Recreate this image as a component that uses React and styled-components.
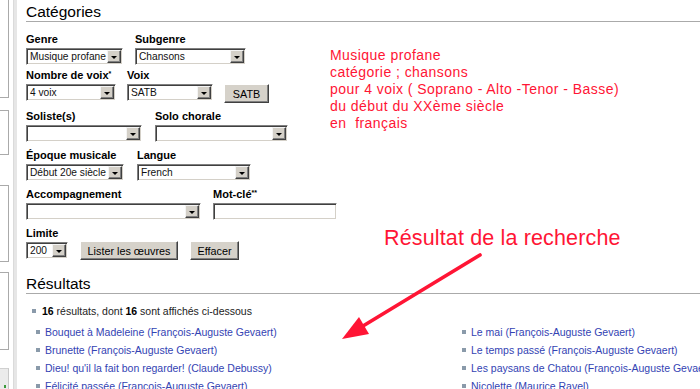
import React from 'react';
import styled, { createGlobalStyle } from 'styled-components';

const GlobalStyle = createGlobalStyle`
  html, body {
    margin: 0;
    padding: 0;
    background: #fff;
    overflow: hidden;
  }
`;

const leftColumn = [
  'Bouquet à Madeleine (François-Auguste Gevaert)',
  'Brunette (François-Auguste Gevaert)',
  "Dieu! qu'il la fait bon regarder! (Claude Debussy)",
  'Félicité passée (François-Auguste Gevaert)',
];

const rightColumn = [
  'Le mai (François-Auguste Gevaert)',
  'Le temps passé (François-Auguste Gevaert)',
  'Les paysans de Chatou (François-Auguste Gevaert)',
  'Nicolette (Maurice Ravel)',
];

const noteLines = [
  'Musique profane',
  'catégorie ; chansons',
  'pour 4 voix ( Soprano - Alto -Tenor - Basse)',
  'du début du XXème siècle',
  'en  français',
];

function Select({ width, value }) {
  return (
    <SelectBox $w={width}>
      <SelectText>{value}</SelectText>
      <ArrowButton>
        <Triangle />
      </ArrowButton>
    </SelectBox>
  );
}

function Field({ label, star, children }) {
  return (
    <FieldWrap>
      <Label>
        {label}
        {star && <Sup>{star}</Sup>}
      </Label>
      {children}
    </FieldWrap>
  );
}

export default function App() {
  return (
    <Page>
      <GlobalStyle />
      <Sidebar>
        <SideBox $h={98} $mt={0} />
        <SideBox $h={45} $mt={12} />
        <SideBox $h={77} $mt={30} />
        <SideBox $h={78} $mt={10} />
        <SideFooter>
          <GreenDot />
        </SideFooter>
      </Sidebar>
      <Gutter />

      <Content>
        <Heading>Catégories</Heading>

        <FormArea>
          <Form>
            <Row $mb={4}>
              <Field label="Genre">
                <Select width={97} value="Musique profane" />
              </Field>
              <Field label="Subgenre">
                <Select width={111} value="Chansons" />
              </Field>
            </Row>
            <Row $gap={11}>
              <Field label="Nombre de voix" star="*">
                <Select width={90} value="4 voix" />
              </Field>
              <Field label="Voix">
                <Select width={86} value="SATB" />
              </Field>
              <Button $w={45} $mt={15}>SATB</Button>
            </Row>
            <Row $gap={13}>
              <Field label="Soliste(s)">
                <Select width={116} value="" />
              </Field>
              <Field label="Solo chorale">
                <Select width={133} value="" />
              </Field>
            </Row>
            <Row $gap={13}>
              <Field label="Époque musicale">
                <Select width={98} value="Début 20e siècle" />
              </Field>
              <Field label="Langue">
                <Select width={114} value="French" />
              </Field>
            </Row>
            <Row>
              <Field label="Accompagnement">
                <Select width={175} value="" />
              </Field>
              <Field label="Mot-clé" star="**">
                <TextInput type="text" readOnly />
              </Field>
            </Row>
            <Row $mb={0}>
              <Field label="Limite">
                <Select width={42} value="200" />
              </Field>
              <Button $w={98} $mt={14}>Lister les œuvres</Button>
              <Button $w={49} $mt={14}>Effacer</Button>
            </Row>
          </Form>

          <Note>
            {noteLines.map((line) => (
              <div key={line}>{line}</div>
            ))}
          </Note>
        </FormArea>

        <Heading $mt={14}>Résultats</Heading>

        <Summary>
          <b>16</b>&nbsp;résultats, dont&nbsp;<b>16</b>&nbsp;sont affichés ci-dessous
        </Summary>

        <Columns>
          {[leftColumn, rightColumn].map((col, i) => (
            <ResultList key={i}>
              {col.map((title) => (
                <ResultItem key={title}>
                  <ResultLink href="#">{title}</ResultLink>
                </ResultItem>
              ))}
            </ResultList>
          ))}
        </Columns>
      </Content>

      <Callout>Résultat de la recherche</Callout>
      <ArrowSvg width="150" height="95" viewBox="0 0 150 95">
        <line x1="145" y1="7" x2="28" y2="78" stroke="#ff1535" strokeWidth="3.6" strokeLinecap="round" />
        <polygon points="7,91 34,86 24,69" fill="#ff1535" />
      </ArrowSvg>
    </Page>
  );
}

const Page = styled.div`
  position: relative;
  display: flex;
  width: 700px;
  height: 389px;
  overflow: hidden;
  background: #fff;
  font-family: "Liberation Sans", Arial, sans-serif;
  color: #000;
`;

const Sidebar = styled.div`
  width: 9px;
  flex-shrink: 0;
  display: flex;
  flex-direction: column;
`;

const SideBox = styled.div`
  box-sizing: border-box;
  height: ${(p) => p.$h}px;
  margin-top: ${(p) => p.$mt}px;
  background: #fff;
  border-right: 1px solid #aaa;
  border-bottom: 1px solid #aaa;
  border-top: ${(p) => (p.$mt > 0 ? '1px solid #aaa' : 'none')};
`;

const SideFooter = styled.div`
  position: relative;
  margin-top: 18px;
  flex: 1;
  background: #ebebeb;
  border-top: 1px solid #d0d0d0;
  border-right: 1px solid #c8c8c8;
`;

const GreenDot = styled.span`
  position: absolute;
  left: 4px;
  bottom: 1px;
  width: 2px;
  height: 3px;
  background: #3c9a3c;
`;

const Gutter = styled.div`
  width: 3px;
  margin-left: 4px;
  flex-shrink: 0;
  background: #e6e6e6;
  border-left: 1px solid #dadada;
`;

const Content = styled.div`
  flex: 1;
  min-width: 0;
  padding-left: 9px;
`;

const Heading = styled.h2`
  margin: ${(p) => p.$mt || 2}px 0 0;
  font-size: 15.5px;
  font-weight: normal;
  line-height: 19px;
  border-bottom: 1px solid #aaa;
  white-space: nowrap;
`;

const FormArea = styled.div`
  display: flex;
  margin-top: 11px;
`;

const Form = styled.div`
  width: 304px;
  flex-shrink: 0;
  display: flex;
  flex-direction: column;
`;

const Row = styled.div`
  display: flex;
  align-items: flex-start;
  gap: ${(p) => p.$gap || 12}px;
  margin-bottom: ${(p) => (p.$mb === undefined ? 7 : p.$mb)}px;
`;

const FieldWrap = styled.div`
  display: flex;
  flex-direction: column;
`;

const Label = styled.label`
  font-size: 11px;
  font-weight: bold;
  line-height: 13px;
  margin-bottom: 2px;
  white-space: nowrap;
`;

const Sup = styled.span`
  font-size: 7px;
  vertical-align: top;
  line-height: 10px;
`;

const SelectBox = styled.div`
  box-sizing: border-box;
  display: flex;
  align-items: center;
  width: ${(p) => p.$w}px;
  height: 17px;
  background: #fff;
  border: 1px solid;
  border-color: #808080 #fff #fff #808080;
  box-shadow: inset 1px 1px #404040, inset -1px -1px #d4d0c8;
  padding: 1px;
`;

const SelectText = styled.span`
  flex: 1;
  min-width: 0;
  padding-left: 2px;
  font-size: 10.2px;
  line-height: 13px;
  color: #111;
  white-space: nowrap;
  overflow: hidden;
`;

const ArrowButton = styled.span`
  box-sizing: border-box;
  width: 14px;
  height: 13px;
  flex-shrink: 0;
  display: flex;
  align-items: center;
  justify-content: center;
  background: #d4d0c8;
  border: 1px solid;
  border-color: #f4f4f4 #404040 #404040 #f4f4f4;
  box-shadow: inset -1px -1px #808080;
`;

const Triangle = styled.span`
  width: 0;
  height: 0;
  border-left: 3px solid transparent;
  border-right: 3px solid transparent;
  border-top: 3px solid #000;
  margin-top: 1px;
`;

const TextInput = styled.input`
  box-sizing: border-box;
  width: 124px;
  height: 17px;
  margin: 0;
  padding: 0 2px;
  background: #fff;
  border: 1px solid;
  border-color: #808080 #fff #fff #808080;
  box-shadow: inset 1px 1px #404040, inset -1px -1px #d4d0c8;
  outline: none;
`;

const Button = styled.button`
  box-sizing: border-box;
  width: ${(p) => p.$w}px;
  height: 19px;
  margin-top: ${(p) => p.$mt || 0}px;
  padding: 0;
  font-family: inherit;
  font-size: 10.8px;
  color: #000;
  background: #d6d2ca;
  border: 1px solid;
  border-color: #fff #404040 #404040 #fff;
  box-shadow: inset -1px -1px #808080;
  white-space: nowrap;
`;

const Note = styled.div`
  margin-top: 14px;
  font-size: 14px;
  line-height: 17px;
  letter-spacing: 0.45px;
  color: #ff1535;
  white-space: pre;
`;

const Summary = styled.div`
  display: flex;
  align-items: center;
  margin-top: 8px;
  padding-left: 6px;
  font-size: 10.5px;
  line-height: 18px;
  color: #222;
  white-space: nowrap;

  &::before {
    content: '';
    width: 4px;
    height: 4px;
    margin-right: 6px;
    background: #8a9aaa;
  }

  b {
    color: #000;
  }
`;

const Columns = styled.div`
  display: flex;
  margin-top: 3px;
  padding-left: 10px;
`;

const ResultList = styled.ul`
  width: 426px;
  flex-shrink: 0;
  margin: 0;
  padding: 0;
  list-style: none;
`;

const ResultItem = styled.li`
  display: flex;
  align-items: center;
  line-height: 18px;
  white-space: nowrap;

  &::before {
    content: '';
    width: 4px;
    height: 4px;
    margin-right: 5px;
    flex-shrink: 0;
    background: #8a9aaa;
  }
`;

const ResultLink = styled.a`
  font-size: 10.5px;
  color: #3343b3;
  text-decoration: none;
`;

const Callout = styled.div`
  position: absolute;
  left: 384px;
  top: 226px;
  font-size: 21.5px;
  line-height: 24px;
  letter-spacing: 0.15px;
  color: #ff1535;
  white-space: nowrap;
`;

const ArrowSvg = styled.svg`
  position: absolute;
  left: 335px;
  top: 248px;
`;
